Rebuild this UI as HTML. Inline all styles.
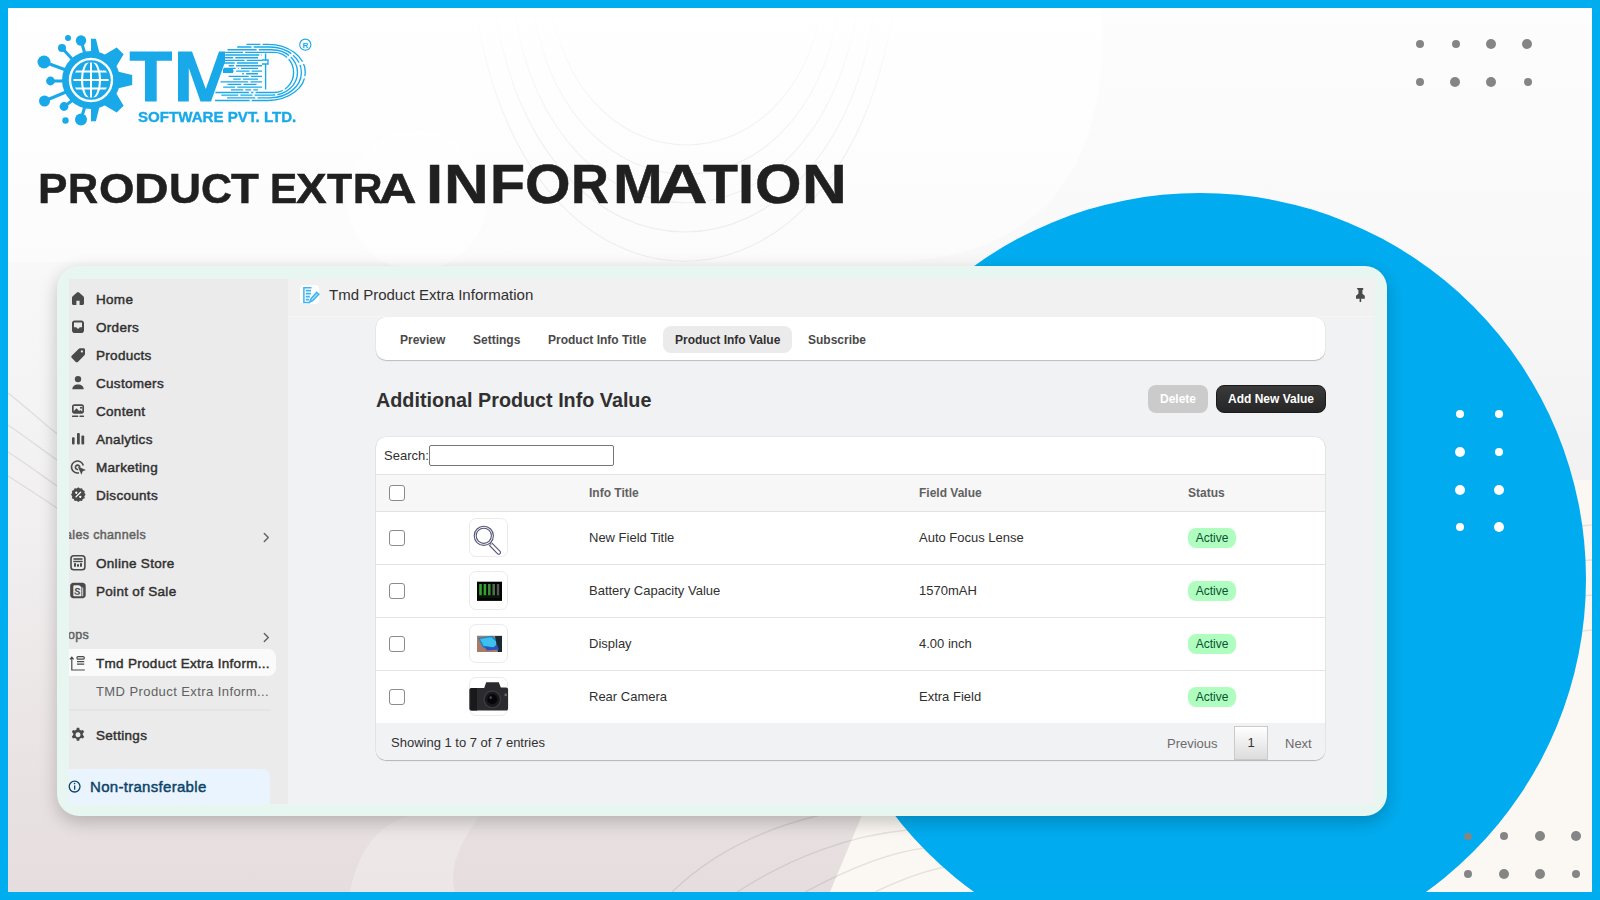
<!DOCTYPE html>
<html><head><meta charset="utf-8">
<style>
*{margin:0;padding:0;box-sizing:border-box}
html,body{width:1600px;height:900px;overflow:hidden;background:#00adef;font-family:"Liberation Sans",sans-serif}
.a{position:absolute;white-space:nowrap}
#frame{position:absolute;left:8px;top:8px;width:1584px;height:884px;overflow:hidden;
 background:linear-gradient(180deg,#fdfdfd 0%,#f8f8f9 30%,#f1eff0 60%,#e9e2e2 88%,#e6dede 100%)}
#circle{position:absolute;left:806px;top:185px;width:772px;height:772px;border-radius:50%;background:#00acef}
.dot{position:absolute;border-radius:50%;background:#858585}
.wdot{position:absolute;border-radius:50%;background:#fff}
.tl{position:absolute;font-weight:bold;line-height:80px;color:#202020;white-space:nowrap;transform-origin:0 0;-webkit-text-stroke:.5px #202020}
#title1{position:absolute;left:39px;top:163px;font-weight:bold;font-size:42.3px;line-height:50px;color:#202020;white-space:nowrap;transform-origin:0 0;transform:scaleX(1.043)}
#title2{position:absolute;left:427px;top:155px;font-weight:bold;font-size:56.7px;line-height:60px;color:#202020;white-space:nowrap;transform-origin:0 0;transform:scaleX(1.065)}
#card{position:absolute;left:57px;top:266px;width:1330px;height:550px;border-radius:22px;background:#e8f6f1;
 box-shadow:0 6px 18px rgba(0,0,0,.22)}
#inner{position:absolute;left:69px;top:279px;width:1306px;height:525px;overflow:hidden;background:#f1f2f4}
#side{position:absolute;left:0;top:0;width:219px;height:525px;background:#ebebeb}
.nav{position:absolute;left:27px;font-size:13.5px;font-weight:normal;-webkit-text-stroke:0.45px currentColor;color:#303030;line-height:16px;letter-spacing:.3px}
.ico{position:absolute;left:2px;width:14px;height:14px}
#hdr{position:absolute;left:219px;top:0;width:1087px;height:38px;background:#f1f1f1;border-bottom:1.5px solid #f6f6f6}
.tab{position:absolute;top:2px;height:42px;line-height:42px;font-size:12px;font-weight:bold;color:#4a4a4a}
.cell{position:absolute;font-size:13px;color:#303030;line-height:16px}
.hcell{position:absolute;font-size:12px;font-weight:bold;color:#616161;line-height:16px}
.cb{position:absolute;left:12.5px;width:16px;height:16px;border:1px solid #8a8a8a;border-radius:3px;background:#fff}
.thumb{position:absolute;left:93px;width:39px;height:39px;border:1px solid #ebebeb;border-radius:7px;background:#fff;overflow:hidden}
.badge{position:absolute;left:812px;width:48px;height:20px;border-radius:8px;background:#affebf;color:#0c5132;font-size:12px;line-height:20px;text-align:center}
.rowline{position:absolute;left:0;width:949px;height:1px;background:#e3e3e3}
</style></head>
<body>
<div id="frame">
<svg class="a" style="left:0;top:0" width="1584" height="884" viewBox="8 8 1584 884">
<defs>
<linearGradient id="cream" x1="0" y1="0" x2="0" y2="1"><stop offset="0" stop-color="#fcf9f4" stop-opacity="0"/><stop offset=".45" stop-color="#fcf9f4" stop-opacity=".7"/><stop offset=".7" stop-color="#fcf8f3"/></linearGradient>
<linearGradient id="ufg" x1="0" y1="0" x2="0" y2="1"><stop offset="0" stop-color="#fff" stop-opacity="0"/><stop offset=".25" stop-color="#fff" stop-opacity=".6"/><stop offset=".5" stop-color="#fff" stop-opacity="1"/></linearGradient><mask id="ufade" maskUnits="userSpaceOnUse" x="8" y="8" width="1584" height="884"><rect x="8" y="8" width="1584" height="300" fill="url(#ufg)"/></mask><linearGradient id="wfade" x1="0" y1="0" x2="0" y2="1"><stop offset="0" stop-color="#fff" stop-opacity=".9"/><stop offset="1" stop-color="#fff" stop-opacity=".45"/></linearGradient>
</defs>
<path d="M8 8 H1102 V40 C1102 170 1040 262 880 262 H8Z" fill="url(#wfade)"/>
<path d="M1592 480 L1420 480 L900 740 L862 815 L830 892 L1592 892Z" fill="#fbf8f3"/>
<path d="M350 892 C360 840 390 815 420 815 L480 815 C455 850 450 870 455 892Z" fill="#efeaea" opacity=".7"/>
<circle cx="417" cy="200" r="70" fill="#fff" opacity=".6"/>
<g fill="none" stroke="#000" stroke-opacity=".055" stroke-width="1.2" mask="url(#ufade)">
<path d="M552 10 C584 190 789 190 821 10"/>
<path d="M533 10 C570 229 802 229 839 10"/>
<path d="M514 10 C555 267 816 267 857 10"/>
<path d="M495 10 C541 306 829 306 875 10"/>
<path d="M476 10 C526 345 843 345 893 10"/>
</g><g fill="none" stroke="#000" stroke-opacity=".085" stroke-width="1.4">
<path d="M672 892 C720 845 790 815 880 805"/>
<path d="M737 892 C790 858 850 835 908 830"/>
<path d="M805 892 C850 868 890 852 925 848"/>
<path d="M875 892 C900 880 920 872 945 867"/>
<path d="M8 393 C30 410 45 425 60 436"/>
<path d="M8 425 C30 440 45 452 60 462"/>
<path d="M8 452 C30 466 45 478 60 488"/>
<path d="M8 476 C30 490 45 500 60 510"/>
<path d="M1530 530 L1592 525"/>
<path d="M1530 565 L1592 560"/>
<path d="M1540 600 L1592 595"/>
<path d="M1545 635 L1592 630"/>
</g>
</svg>
  <div id="circle"></div>
</div>
<!-- top-right dots -->
<div class="dot" style="left:1416px;top:40px;width:8px;height:8px"></div>
<div class="dot" style="left:1452px;top:40px;width:8px;height:8px"></div>
<div class="dot" style="left:1486px;top:39px;width:10px;height:10px"></div>
<div class="dot" style="left:1522px;top:39px;width:10px;height:10px"></div>
<div class="dot" style="left:1416px;top:78px;width:8px;height:8px"></div>
<div class="dot" style="left:1450px;top:77px;width:10px;height:10px"></div>
<div class="dot" style="left:1486px;top:77px;width:10px;height:10px"></div>
<div class="dot" style="left:1524px;top:78px;width:8px;height:8px"></div>
<!-- bottom-right dots -->
<div class="dot" style="left:1464px;top:832.5px;width:7.5px;height:7.5px"></div>
<div class="dot" style="left:1499.5px;top:832px;width:8px;height:8px"></div>
<div class="dot" style="left:1534.5px;top:831px;width:10px;height:10px"></div>
<div class="dot" style="left:1570.5px;top:831px;width:10px;height:10px"></div>
<div class="dot" style="left:1464px;top:870px;width:8px;height:8px"></div>
<div class="dot" style="left:1498.5px;top:869px;width:10px;height:10px"></div>
<div class="dot" style="left:1534.5px;top:869px;width:10px;height:10px"></div>
<div class="dot" style="left:1571.5px;top:870px;width:8px;height:8px"></div>
<!-- white dots -->
<div class="wdot" style="left:1456px;top:410px;width:8px;height:8px"></div>
<div class="wdot" style="left:1495px;top:410px;width:8px;height:8px"></div>
<div class="wdot" style="left:1455px;top:447px;width:10px;height:10px"></div>
<div class="wdot" style="left:1495px;top:448px;width:8px;height:8px"></div>
<div class="wdot" style="left:1455px;top:485px;width:10px;height:10px"></div>
<div class="wdot" style="left:1494px;top:485px;width:10px;height:10px"></div>
<div class="wdot" style="left:1456px;top:523px;width:8px;height:8px"></div>
<div class="wdot" style="left:1494px;top:522px;width:10px;height:10px"></div>

<!--LOGO-->
<svg class="a" style="left:0;top:0" width="330" height="135" viewBox="0 0 330 135"><g fill="#19a9e9" stroke="none"><clipPath id="glb"><circle cx="91" cy="80" r="17.6"/></clipPath><clipPath id="gc"><rect x="91" y="0" width="60" height="160"/></clipPath><path clip-path="url(#gc)" d="M82.2 54.5L86.1 38.8L95.9 38.8L99.8 54.5ZM102.8 55.7L116.7 47.4L123.6 54.3L115.3 68.2ZM116.5 71.2L132.2 75.1L132.2 84.9L116.5 88.8ZM115.3 91.8L123.6 105.7L116.7 112.6L102.8 104.3ZM99.8 105.5L95.9 121.2L86.1 121.2L82.2 105.5Z"/><circle cx="91" cy="80" r="29"/><circle cx="81" cy="40.5" r="5.2"/><line x1="81" y1="40.5" x2="85" y2="54" stroke="#19a9e9" stroke-width="3"/><circle cx="62" cy="48" r="4.0"/><line x1="62" y1="48" x2="73" y2="60" stroke="#19a9e9" stroke-width="3"/><circle cx="44" cy="62" r="6.5"/><line x1="44" y1="62" x2="66" y2="70" stroke="#19a9e9" stroke-width="3"/><circle cx="50.5" cy="81" r="4.4"/><line x1="50.5" y1="81" x2="66" y2="81" stroke="#19a9e9" stroke-width="3"/><circle cx="44.5" cy="101" r="5.5"/><line x1="44.5" y1="101" x2="66" y2="92" stroke="#19a9e9" stroke-width="3"/><circle cx="64" cy="106.5" r="4.4"/><line x1="64" y1="106.5" x2="73" y2="100" stroke="#19a9e9" stroke-width="3"/><circle cx="81" cy="119.5" r="6.0"/><line x1="81" y1="119.5" x2="85" y2="106" stroke="#19a9e9" stroke-width="3"/><circle cx="68" cy="38" r="3.0"/><circle cx="65.5" cy="120.5" r="3.2"/></g><circle cx="91" cy="80" r="21" fill="none" stroke="#fff" stroke-width="2.4"/><g stroke="#fff" stroke-width="2" fill="none" clip-path="url(#glb)"><line x1="72" y1="71.5" x2="110" y2="71.5"/><line x1="72" y1="80" x2="110" y2="80"/><line x1="72" y1="88.5" x2="110" y2="88.5"/><line x1="91" y1="61" x2="91" y2="99"/><ellipse cx="91" cy="80" rx="9" ry="19"/></g><g fill="#19a9e9"><path d="M129.7 51.5H172V60.8H156.7V101.4H145V60.8H129.7Z"/><path d="M178 51.5H192L205.8 89L219 51.5H225V62L211 101.4H200.5L188.8 68V101.4H178Z"/></g><g stroke="#19a9e9" stroke-width="1.35" fill="none"><path d="M246.5 44.3H268.0A37.3 28.1 0 0 1 268.0 100.5H215.1M237.2 47.0H270.0A31.4 25.4 0 0 1 270.0 97.8H227.1M227.5 49.7H272.0A25.5 22.7 0 0 1 272.0 95.1H221.3M225.2 52.3H274.0A19.6 20.1 0 0 1 274.0 92.5H215.4"/><path d="M225.2 55.0H262.0M223.6 57.7H258.0M223.6 60.4H262.0M223.6 63.0H258.0M228.7 65.7H262.0M223.6 68.4H258.0M233.3 71.1H262.0M242.3 73.7H258.0M228.7 76.4H262.0M233.3 79.1H258.0M220.5 81.8H262.0M227.5 84.4H258.0M223.2 87.1H262.0M231.0 89.8H258.0"/><path d="M265.6 53.5V60M265.6 64V89.6M262 60H268V64H262"/></g><g stroke="#fcfcfc" stroke-width="1.6" fill="none"></g><g fill="#fcfcfc"><rect x="260.4" y="43.0" width="2.2" height="2.6"/><rect x="251.5" y="45.7" width="2.2" height="2.6"/><rect x="256.6" y="48.4" width="2.2" height="2.6"/><rect x="243.0" y="51.0" width="2.2" height="2.6"/><rect x="259.3" y="53.7" width="2.2" height="2.6"/><rect x="233.1" y="56.4" width="2.2" height="2.6"/><rect x="244.5" y="59.1" width="2.2" height="2.6"/><rect x="234.7" y="61.7" width="2.2" height="2.6"/><rect x="233.8" y="64.4" width="2.2" height="2.6"/><rect x="235.7" y="67.1" width="2.2" height="2.6"/><rect x="238.7" y="67.1" width="2.2" height="2.6"/><rect x="249.5" y="69.8" width="2.2" height="2.6"/><rect x="233.9" y="69.8" width="2.2" height="2.6"/><rect x="243.9" y="72.4" width="2.2" height="2.6"/><rect x="261.3" y="72.4" width="2.2" height="2.6"/><rect x="248.7" y="75.1" width="2.2" height="2.6"/><rect x="240.7" y="77.8" width="2.2" height="2.6"/><rect x="248.2" y="80.5" width="2.2" height="2.6"/><rect x="241.3" y="83.1" width="2.2" height="2.6"/><rect x="256.5" y="83.1" width="2.2" height="2.6"/><rect x="235.1" y="85.8" width="2.2" height="2.6"/><rect x="251.2" y="88.5" width="2.2" height="2.6"/><rect x="243.2" y="88.5" width="2.2" height="2.6"/><rect x="253.4" y="91.2" width="2.2" height="2.6"/><rect x="248.9" y="91.2" width="2.2" height="2.6"/><rect x="238.2" y="93.8" width="2.2" height="2.6"/><rect x="252.4" y="93.8" width="2.2" height="2.6"/><rect x="255.3" y="96.5" width="2.2" height="2.6"/><rect x="249.6" y="99.2" width="2.2" height="2.6"/><rect x="303.5" y="76.1" width="2.4" height="2.4" transform="rotate(10 304.7 77.3)"/><rect x="301.9" y="61.6" width="2.4" height="2.4" transform="rotate(-20 303.1 62.8)"/><rect x="298.3" y="62.5" width="2.4" height="2.4" transform="rotate(-20 299.5 63.7)"/><rect x="291.0" y="53.2" width="2.4" height="2.4" transform="rotate(-45 292.2 54.4)"/><rect x="275.2" y="93.6" width="2.4" height="2.4" transform="rotate(80 276.4 94.8)"/><rect x="288.8" y="55.1" width="2.4" height="2.4" transform="rotate(-45 290.0 56.3)"/><rect x="282.6" y="88.6" width="2.4" height="2.4" transform="rotate(60 283.8 89.8)"/><rect x="286.7" y="57.0" width="2.4" height="2.4" transform="rotate(-45 287.9 58.2)"/></g><circle cx="305.3" cy="44.7" r="5.6" fill="none" stroke="#19a9e9" stroke-width="1.1"/><text x="305.3" y="47.8" font-family="Liberation Sans" font-weight="bold" font-size="8" fill="#19a9e9" text-anchor="middle">R</text></svg>
<div class="a" style="left:137.5px;top:106.5px;font-size:14.6px;font-weight:bold;color:#19a9e9;line-height:20px;transform-origin:0 0;transform:scaleX(1.035);-webkit-text-stroke:.35px #19a9e9">SOFTWARE PVT. LTD.</div>
<div class="a" style="left:223px;top:69px;width:10px;height:4px;background:#19a9e9"></div>
<!--/LOGO-->
<div id="title">
<span class="tl" style="left:38.12px;top:148.7px;font-size:42.3px;transform:scaleX(1.042)">P</span>
<span class="tl" style="left:68.29px;top:148.7px;font-size:42.3px;transform:scaleX(0.987)">R</span>
<span class="tl" style="left:99.09px;top:148.7px;font-size:42.3px;transform:scaleX(1.078)">O</span>
<span class="tl" style="left:134.11px;top:148.7px;font-size:42.3px;transform:scaleX(1.131)">D</span>
<span class="tl" style="left:168.76px;top:148.7px;font-size:42.3px;transform:scaleX(1.048)">U</span>
<span class="tl" style="left:201.07px;top:148.7px;font-size:42.3px;transform:scaleX(1.015)">C</span>
<span class="tl" style="left:231.20px;top:148.7px;font-size:42.3px;transform:scaleX(1.076)">T</span>
<span class="tl" style="left:270.21px;top:148.7px;font-size:42.3px;transform:scaleX(0.965)">E</span>
<span class="tl" style="left:295.81px;top:148.7px;font-size:42.3px;transform:scaleX(1.087)">X</span>
<span class="tl" style="left:326.90px;top:148.7px;font-size:42.3px;transform:scaleX(0.974)">T</span>
<span class="tl" style="left:352.72px;top:148.7px;font-size:42.3px;transform:scaleX(0.962)">R</span>
<span class="tl" style="left:379.37px;top:148.7px;font-size:42.3px;transform:scaleX(1.229)">A</span>
<span class="tl" style="left:426.05px;top:143.7px;font-size:55.5px;transform:scaleX(1.112)">I</span>
<span class="tl" style="left:443.94px;top:143.7px;font-size:55.5px;transform:scaleX(1.116)">N</span>
<span class="tl" style="left:489.67px;top:143.7px;font-size:55.5px;transform:scaleX(1.032)">F</span>
<span class="tl" style="left:524.69px;top:143.7px;font-size:55.5px;transform:scaleX(1.056)">O</span>
<span class="tl" style="left:571.13px;top:143.7px;font-size:55.5px;transform:scaleX(0.943)">R</span>
<span class="tl" style="left:612.59px;top:143.7px;font-size:55.5px;transform:scaleX(1.077)">M</span>
<span class="tl" style="left:657.08px;top:143.7px;font-size:55.5px;transform:scaleX(1.261)">A</span>
<span class="tl" style="left:702.57px;top:143.7px;font-size:55.5px;transform:scaleX(1.031)">T</span>
<span class="tl" style="left:737.95px;top:143.7px;font-size:55.5px;transform:scaleX(1.037)">I</span>
<span class="tl" style="left:755.05px;top:143.7px;font-size:55.5px;transform:scaleX(1.077)">O</span>
<span class="tl" style="left:802.23px;top:143.7px;font-size:55.5px;transform:scaleX(1.119)">N</span>
</div>

<div id="card"></div>
<div id="inner">
  <div id="side">
    <div class="nav" style="top:13px">Home</div>
    <div class="nav" style="top:41px">Orders</div>
    <div class="nav" style="top:69px">Products</div>
    <div class="nav" style="top:97px">Customers</div>
    <div class="nav" style="top:125px">Content</div>
    <div class="nav" style="top:153px">Analytics</div>
    <div class="nav" style="top:181px">Marketing</div>
    <div class="nav" style="top:209px">Discounts</div>
    <div class="nav" style="top:248px;left:-4px;color:#616161;font-size:12.5px;letter-spacing:.35px">ales channels</div>
    <div class="nav" style="top:277px">Online Store</div>
    <div class="nav" style="top:305px">Point of Sale</div>
    <div class="nav" style="top:348px;left:-1px;color:#616161;font-size:12.5px;letter-spacing:.35px">ops</div>
    <div class="a" style="left:0;top:370px;width:207px;height:27px;background:#fafafa;border-radius:0 8px 8px 0"></div>
    <div class="nav" style="top:377px">Tmd Product Extra Inform...</div>
    <div class="nav" style="top:405px;font-weight:normal;-webkit-text-stroke:0;font-size:13px;color:#616161;letter-spacing:.42px">TMD Product Extra Inform...</div>
    <div class="a" style="left:0;top:430px;width:202px;height:2px;background:#e4e4e4;border-radius:1px"></div>
    <div class="nav" style="top:449px">Settings</div>
    <div class="a" style="left:0;top:490px;width:201px;height:35px;background:#eaf4ff;border-radius:0 8px 0 0"></div>
    <div class="nav" style="top:499px;left:21px;font-size:15px;line-height:18px;color:#0b4468;letter-spacing:.3px">Non-transferable</div>
  </div>
  <div id="hdr">
    <div class="a" style="left:12px;top:6px;width:19px;height:19px;background:#fff;border-radius:4px"></div>
    <div class="a" style="left:41px;top:7px;font-size:15px;line-height:18px;color:#303030">Tmd Product Extra Information</div>
  </div>
  <!-- tabs -->
  <div class="a" style="left:307px;top:38px;width:949px;height:43px;background:#fff;border-radius:10px;box-shadow:0 1px 1px rgba(0,0,0,.2),0 0 0 .5px rgba(0,0,0,.05)">
    <div class="tab" style="left:24px">Preview</div>
    <div class="tab" style="left:97px">Settings</div>
    <div class="tab" style="left:172px">Product Info Title</div>
    <div class="a" style="left:287px;top:9px;width:129px;height:27px;background:#ebebeb;border-radius:8px"></div>
    <div class="tab" style="left:299px;color:#303030">Product Info Value</div>
    <div class="tab" style="left:432px">Subscribe</div>
  </div>
  <div class="a" style="left:307px;top:108.5px;font-size:19.75px;font-weight:bold;color:#303030;line-height:24px">Additional Product Info Value</div>
  <div class="a" style="left:1079px;top:106px;width:60px;height:28px;background:#cbcbcb;border-radius:8px;color:#fff;font-size:12px;font-weight:bold;line-height:28px;text-align:center">Delete</div>
  <div class="a" style="left:1147px;top:106px;width:110px;height:28px;background:linear-gradient(#3a3a3a,#262626);border:1px solid #1a1a1a;border-radius:8px;color:#fff;font-size:12px;font-weight:bold;line-height:26px;text-align:center">Add New Value</div>

  <!-- table card -->
  <div class="a" style="left:307px;top:158px;width:949px;height:323px;background:#fff;border-radius:10px;overflow:hidden;box-shadow:0 1px 1px rgba(0,0,0,.22),0 0 0 .5px rgba(0,0,0,.08)">
    <div class="cell" style="left:8px;top:11px">Search:</div>
    <div class="a" style="left:53px;top:8px;width:185px;height:21px;border:1px solid #767676;border-radius:2px"></div>
    <div class="a" style="left:0;top:37px;width:949px;height:38px;background:#f7f7f7;border-top:1px solid #e3e3e3;border-bottom:1px solid #e3e3e3"></div>
    <div class="cb" style="top:48px"></div>
    <div class="hcell" style="left:213px;top:47.5px">Info Title</div>
    <div class="hcell" style="left:543px;top:47.5px">Field Value</div>
    <div class="hcell" style="left:812px;top:47.5px">Status</div>

    <div class="cb" style="top:93px"></div>
    <div class="thumb" style="top:81px"></div>
    <div class="cell" style="left:213px;top:92.5px">New Field Title</div>
    <div class="cell" style="left:543px;top:92.5px">Auto Focus Lense</div>
    <div class="badge" style="top:91px">Active</div>
    <div class="rowline" style="top:127px"></div>

    <div class="cb" style="top:146px"></div>
    <div class="thumb" style="top:134px"></div>
    <div class="cell" style="left:213px;top:145.5px">Battery Capacity Value</div>
    <div class="cell" style="left:543px;top:145.5px">1570mAH</div>
    <div class="badge" style="top:144px">Active</div>
    <div class="rowline" style="top:180px"></div>

    <div class="cb" style="top:199px"></div>
    <div class="thumb" style="top:187px"></div>
    <div class="cell" style="left:213px;top:198.5px">Display</div>
    <div class="cell" style="left:543px;top:198.5px">4.00 inch</div>
    <div class="badge" style="top:197px">Active</div>
    <div class="rowline" style="top:233px"></div>

    <div class="cb" style="top:252px"></div>
    <div class="thumb" style="top:240px"></div>
    <div class="cell" style="left:213px;top:251.5px">Rear Camera</div>
    <div class="cell" style="left:543px;top:251.5px">Extra Field</div>
    <div class="badge" style="top:250px">Active</div>

    <div class="a" style="left:0;top:286px;width:950px;height:37px;background:#f1f2f4"></div>
    <div class="cell" style="left:15px;top:298px;font-size:13px">Showing 1 to 7 of 7 entries</div>
    <div class="cell" style="left:791px;top:299px;color:#6b6b6b">Previous</div>
    <div class="a" style="left:858px;top:289px;width:34px;height:34px;border:1px solid #cacaca;background:linear-gradient(#fff,#dcdcdc);font-size:13px;color:#333;text-align:center;line-height:32px">1</div>
    <div class="cell" style="left:909px;top:299px;color:#6b6b6b">Next</div>
  </div>
</div>
<svg class="a" style="left:0;top:0;pointer-events:none" width="1600" height="900" viewBox="0 0 1600 900">
<g fill="#4a4a4a">
<!-- home -->
<path d="M78 292.2c.4 0 .8.15 1.1.4l4.2 3.7c.45.4.7.95.7 1.55v5.65c0 .85-.65 1.5-1.5 1.5h-2.9v-4.3h-3.2v4.3h-2.9c-.85 0-1.5-.65-1.5-1.5v-5.65c0-.6.25-1.15.7-1.55l4.2-3.7c.3-.25.7-.4 1.1-.4z"/>
<!-- orders -->
<path d="M74.6 320.6h6.8c1.45 0 2.6 1.15 2.6 2.6v7.2c0 1.45-1.15 2.6-2.6 2.6h-6.8c-1.45 0-2.6-1.15-2.6-2.6v-7.2c0-1.45 1.15-2.6 2.6-2.6zM74 322.6v4.6h2.4l.7 1.3h1.8l.7-1.3h2.4v-4.6z" fill-rule="evenodd"/>
<!-- products tag -->
<path d="M79.2 348.2h4.3c.85 0 1.5.65 1.5 1.5v4.3c0 .5-.2.95-.55 1.3l-6.6 6.6c-.6.6-1.5.6-2.1 0l-4.05-4.05c-.6-.6-.6-1.5 0-2.1l6.6-6.6c.35-.35.8-.55 1.3-.55zM81.9 350.3a1.1 1.1 0 1 0 .01 0z" fill-rule="evenodd"/>
<!-- customers -->
<circle cx="78" cy="379.1" r="3.2"/>
<path d="M72.3 389.2c0-3 2.4-4.7 5.7-4.7s5.7 1.7 5.7 4.7z"/>
<!-- content -->
<path d="M74.2 404.3h7.6c1.2 0 2.2 1 2.2 2.2v5c0 1.2-1 2.2-2.2 2.2h-7.6c-1.2 0-2.2-1-2.2-2.2v-5c0-1.2 1-2.2 2.2-2.2zM73.7 406v5.3l2.8-3 2.6 2.6 1.2-1 2 1.6v-5.5zM81 406.7a1 1 0 1 0 .01 0z" fill-rule="evenodd"/>
<rect x="72" y="415.5" width="6.3" height="1.4" rx=".5"/><rect x="79.5" y="415.5" width="4.5" height="1.4" rx=".5"/>
<!-- analytics -->
<rect x="72" y="437.2" width="2.6" height="7.4" rx="1"/><rect x="77" y="433" width="2.8" height="11.6" rx="1"/><rect x="81.4" y="435.6" width="2.8" height="9" rx="1"/>
<!-- discounts -->
<path d="M78.3 487.3l1.7 1.2 2-.3.8 1.9 1.9.8-.3 2 1.2 1.7-1.2 1.7.3 2-1.9.8-.8 1.9-2-.3-1.7 1.2-1.7-1.2-2 .3-.8-1.9-1.9-.8.3-2-1.2-1.7 1.2-1.7-.3-2 1.9-.8.8-1.9 2 .3z"/>
<!-- POS -->
<path d="M73.2 582.8h9.5c1.65 0 3 1.35 3 3v9.5c0 1.65-1.35 3-3 3h-9.5c-1.65 0-3-1.35-3-3v-9.5c0-1.65 1.35-3 3-3zM74.5 585.3h4.6l2.3 1.6v9.3h-7.3c-.5 0-.8-.3-.8-.8v-8.6c0-.9.5-1.5 1.2-1.5zM82.3 587.2l.9.6v8.4h-.9z" fill-rule="evenodd"/>
<!-- settings gear -->
<path d="M76.8 727.8h2.4l.45 1.9 1.5.85 1.85-.6 1.2 2.05-1.4 1.35v1.75l1.4 1.35-1.2 2.05-1.85-.6-1.5.85-.45 1.9h-2.4l-.45-1.9-1.5-.85-1.85.6-1.2-2.05 1.4-1.35v-1.75l-1.4-1.35 1.2-2.05 1.85.6 1.5-.85zM78 732.3a2.5 2.5 0 1 0 .01 0z" fill-rule="evenodd"/>
<!-- pin -->
<path d="M1356.8 288h6.4v1.6l-.8.6v3.6l2.4 2v2.9h-3.6v3.3h-1.6v-3.3h-3.6v-2.9l2.4-2v-3.6l-.8-.6z"/>
</g>
<g fill="#fff">
<path d="M78.7 496.8l-2.6-2.6M76.3 491.9a.9.9 0 1 0 .01 0M80.3 495.9a.9.9 0 1 0 .01 0"/>
</g>
<g stroke="#fff" stroke-width="1.3" fill="none" stroke-linecap="round"><path d="M80.6 492.3l-4.6 4.6"/></g>
<g fill="#fff"><circle cx="76.3" cy="492.5" r="1"/><circle cx="80.3" cy="496.7" r="1"/></g>
<!-- POS S -->
<text x="77.3" y="594.8" font-family="Liberation Sans" font-weight="bold" font-size="9.5" fill="#4a4a4a" text-anchor="middle" transform="rotate(8 77.3 591)">S</text>
<g fill="none" stroke="#4a4a4a" stroke-width="1.6">
<!-- marketing -->
<path d="M83.3 465.5a6 6 0 1 0-4.3 7.3"/>
<path d="M79.8 467.4a2.2 2.2 0 1 0-1.6 2"/>
<!-- online store -->
<rect x="71" y="555.8" width="13.9" height="14" rx="2.8"/>
</g>
<path fill="#4a4a4a" d="M77.8 466.6l8.1 3.3-3.2 1.3-1.3 3.6z"/>
<g fill="#4a4a4a">
<rect x="73.5" y="558.2" width="9" height="1.6"/>
<rect x="73.3" y="560.8" width="9.4" height="1.4"/>
<rect x="74" y="563.2" width="2" height="3.5"/><rect x="77" y="564.2" width="2" height="2.5"/><rect x="80" y="563.2" width="2" height="3.5"/>
</g>
<!-- apps tmd icon -->
<g fill="none" stroke="#4a4a4a" stroke-width="1.2">
<path d="M71.8 657.5v12.5h13"/><path d="M70 659.3l1.8-2.1 1.8 2.1"/>
<rect x="77" y="656.6" width="7.2" height="2.6" rx="1"/>
<path d="M77 661.6h7.2M77 664.2h7.2"/>
</g>
<!-- info -->
<g fill="none" stroke="#0b4468" stroke-width="1.3"><circle cx="74.6" cy="786.6" r="5.4"/></g>
<g fill="#0b4468"><rect x="74" y="785.5" width="1.3" height="4.2"/><circle cx="74.6" cy="783.6" r=".8"/></g>
<!-- chevrons -->
<g fill="none" stroke="#616161" stroke-width="1.4" stroke-linecap="round" stroke-linejoin="round">
<path d="M264.3 533.5l4 4-4 4M264.3 633.5l4 4-4 4"/>
</g>
<!-- app icon doc -->
<g fill="none" stroke="#3cb5f0" stroke-width="1.5">
<path d="M311.5 287.8h-7.6v14.6h6"/>
<path d="M305.8 290.6h5.2M305.8 293.6h5.2M305.8 296.6h4M305.8 299.6h3.2" stroke-width="1.6"/>
<path d="M316.8 292.3l-5.8 6.3-1.2 3.4 3.2-1.5 5.8-6.3z" fill="#9fdcf8"/>
</g>
</svg>

<svg class="a" style="left:0;top:0;pointer-events:none" width="1600" height="900" viewBox="0 0 1600 900">
<!-- magnifier -->
<g fill="none" stroke="#55547a" stroke-width="1.1">
<circle cx="483.8" cy="535.8" r="9.6"/>
<circle cx="483.8" cy="535.8" r="7.6"/>
<path d="M490 543.3l1.3 1.4"/>
<path d="M491.5 542.6l8.4 8.6c.8.8.8 2 0 2.6-.7.6-1.8.5-2.5-.2l-8.3-8.6"/>
</g>
<!-- battery -->
<rect x="477" y="581.7" width="25" height="19.2" fill="#020402"/>
<g>
<rect x="479.2" y="584" width="2.6" height="12" fill="#2ea82a"/>
<rect x="483.6" y="584" width="2.6" height="12" fill="#36a030"/>
<rect x="488" y="584" width="2.6" height="12" fill="#3f8a3a"/>
<rect x="492.4" y="584" width="2.6" height="12" fill="#4e6e4c"/>
<rect x="496.8" y="584" width="2.4" height="12" fill="#555"/>
<rect x="479" y="595" width="21" height="3" fill="#0a1a0a" opacity=".8"/>
</g>
<!-- display image -->
<rect x="477" y="635.8" width="25" height="16.2" fill="#c98e7a"/>
<path d="M477 635.8h25v16.2h-25z" fill="#6a4a40" opacity=".3"/>
<path d="M478 638l14 -2.2 8 6.8 -3 7 -14 -1.5z" fill="#1e88c8"/>
<path d="M480 639l11 -1.8 6 5 -2 5 -11 -1z" fill="#3ec0ef"/>
<path d="M495 636h7v16h-4z" fill="#1a2a30"/>
<path d="M484 646l9 1.5 4 -3 2 5 -12 1z" fill="#2a55c0"/>
<!-- camera -->
<path d="M486.2 682.2h12.6l2 5.4h5.3c1.2 0 2 .8 2 2v18.9c0 1.2-.8 2.1-2 2.1h-34.8c-1.2 0-2-.9-2-2.1v-18.4c0-1.3.8-2 2-2h12.9z" fill="#2b2a2e"/>
<path d="M470.5 689.5c0-1 .6-1.5 1.5-1.5h5v22.4h-5c-.9 0-1.5-.6-1.5-1.5z" fill="#19181b"/>
<circle cx="492.3" cy="699.3" r="9" fill="#3c3b40"/>
<circle cx="492.3" cy="699.3" r="7.6" fill="#19181c"/>
<circle cx="492.3" cy="699.3" r="5" fill="#060608"/>
<circle cx="490.7" cy="697.6" r="1.3" fill="#4a4a58"/>
<rect x="504.6" y="693.5" width="2.2" height="2.6" fill="#6a6a70"/>
</svg>

</body></html>
